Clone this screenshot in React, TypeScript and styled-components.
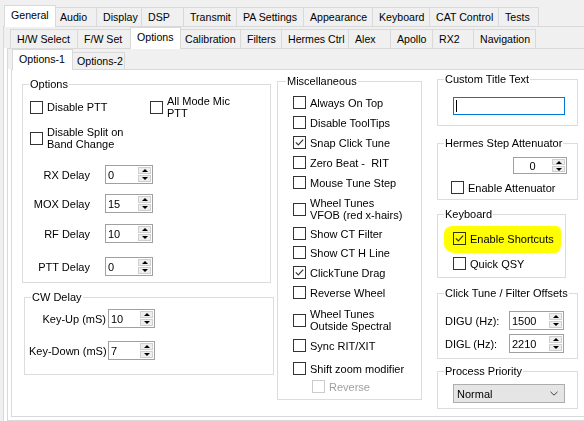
import * as React from "react"
import styled, { createGlobalStyle } from "styled-components"

const GlobalStyle = createGlobalStyle`
  html, body {
    margin: 0;
    padding: 0;
    background: #f0f0f0;
  }
  body {
    font-family: "Liberation Sans", Arial, sans-serif;
    font-size: 11px;
    color: #000;
  }
`

type TabDef = { label: string; w: number; active?: boolean }

const row1: TabDef[] = [
  { label: "General", w: 47, active: true },
  { label: "Audio", w: 43 },
  { label: "Display", w: 45 },
  { label: "DSP", w: 42 },
  { label: "Transmit", w: 53 },
  { label: "PA Settings", w: 67 },
  { label: "Appearance", w: 69 },
  { label: "Keyboard", w: 57 },
  { label: "CAT Control", w: 69 },
  { label: "Tests", w: 40 },
]

const row2: TabDef[] = [
  { label: "H/W Select", w: 67 },
  { label: "F/W Set", w: 55 },
  { label: "Options", w: 46, active: true },
  { label: "Calibration", w: 62 },
  { label: "Filters", w: 41 },
  { label: "Hermes Ctrl", w: 67 },
  { label: "Alex", w: 42 },
  { label: "Apollo", w: 42 },
  { label: "RX2", w: 41 },
  { label: "Navigation", w: 62 },
]

const row3: TabDef[] = [
  { label: "Options-1", w: 56, active: true },
  { label: "Options-2", w: 54 },
]

const Window = styled.div`
  box-sizing: border-box;
  width: 584px;
  height: 421px;
  overflow: hidden;
  padding-left: 3px;
  background: #f0f0f0;
`

const Strip = styled.div<{ $h: number; $pl: number }>`
  position: relative;
  z-index: 1;
  display: flex;
  align-items: flex-end;
  height: ${p => p.$h}px;
  padding-left: ${p => p.$pl}px;
  background: #f0f0f0;
`

const TabItem = styled.div<{
  $w: number
  $h: number
  $sel: number
  $selPad: number
  $active?: boolean
}>`
  position: relative;
  z-index: ${p => (p.$active ? 2 : 1)};
  box-sizing: border-box;
  flex: none;
  display: flex;
  align-items: center;
  width: ${p => (p.$active ? p.$w + 5 : p.$w + 1)}px;
  height: ${p => (p.$active ? p.$sel : p.$h)}px;
  margin: 0 ${p => (p.$active ? -3 : -1)}px ${p => (p.$active ? -1 : 0)}px
    ${p => (p.$active ? -2 : 0)}px;
  padding: 0 0 ${p => (p.$active ? p.$selPad : 0)}px 6px;
  border: 1px solid #d9d9d9;
  border-bottom: none;
  background: ${p => (p.$active ? "#ffffff" : "#f0f0f0")};
  white-space: nowrap;
  font-size: 10.6px;
  line-height: 13px;
`

const Frame = styled.div<{ $ml?: number; $w: number; $h: number; $pb?: number }>`
  box-sizing: border-box;
  width: ${p => p.$w}px;
  height: ${p => p.$h}px;
  margin-left: ${p => p.$ml ?? 0}px;
  padding-bottom: ${p => p.$pb ?? 0}px;
  border: 1px solid #d9d9d9;
  background: #ffffff;
`

const TabRow: React.FC<{
  tabs: TabDef[]
  stripH: number
  pl: number
  h: number
  sel: number
  selPad: number
}> = ({ tabs, stripH, pl, h, sel, selPad }) => (
  <Strip $h={stripH} $pl={pl}>
    {tabs.map(t => (
      <TabItem key={t.label} $w={t.w} $h={h} $sel={sel} $selPad={selPad} $active={t.active}>
        {t.label}
      </TabItem>
    ))}
  </Strip>
)

/* ---------- page content ---------- */

const Page = styled.div`
  display: flex;
  align-items: flex-start;
  padding-left: 10px;
`

const Column = styled.div<{ $w: number; $mt: number; $ml?: number }>`
  flex: none;
  display: flex;
  flex-direction: column;
  align-items: flex-start;
  width: ${p => p.$w}px;
  margin-top: ${p => p.$mt}px;
  margin-left: ${p => p.$ml ?? 0}px;
`

const Group = styled.fieldset<{ $w: number; $mt?: number; $ml?: number }>`
  box-sizing: border-box;
  width: ${p => p.$w}px;
  min-width: 0;
  margin: ${p => p.$mt ?? 0}px 0 0 ${p => p.$ml ?? 0}px;
  padding: 0;
  border: 1px solid #dcdcdc;
`

const Legend = styled.legend<{ $ml?: number }>`
  margin-left: ${p => p.$ml ?? 6}px;
  padding: 0 1px;
  line-height: 13px;
  font-size: 11px;
`

const Body = styled.div<{ $pl: number; $pb: number }>`
  display: flex;
  flex-direction: column;
  align-items: flex-start;
  padding: 0 0 ${p => p.$pb}px ${p => p.$pl}px;
`

const PairRow = styled.div<{ $mt: number }>`
  display: grid;
  grid-template-columns: 120px auto;
  align-items: center;
  height: 24px;
  margin-top: ${p => p.$mt}px;
`

const CheckRow = styled.div<{ $mt?: number; $ml?: number }>`
  position: relative;
  display: flex;
  align-items: center;
  gap: 4px;
  min-height: 13px;
  margin-top: ${p => p.$mt ?? 0}px;
  margin-left: ${p => p.$ml ?? 0}px;
`

const Box = styled.span<{ $disabled?: boolean }>`
  flex: none;
  box-sizing: border-box;
  display: flex;
  align-items: center;
  justify-content: center;
  width: 13px;
  height: 13px;
  border: 1px solid ${p => (p.$disabled ? "#cccccc" : "#333333")};
  background: #ffffff;
`

const CheckText = styled.span<{ $disabled?: boolean }>`
  line-height: 12px;
  white-space: nowrap;
  color: ${p => (p.$disabled ? "#a0a0a0" : "#000000")};
`

const Marker = styled.span`
  position: absolute;
  left: -9px;
  top: -6px;
  width: 117px;
  height: 27px;
  background: #ffff00;
  border-radius: 9px 5px 6px 11px / 7px 5px 8px 9px;
  mix-blend-mode: multiply;
  pointer-events: none;
`

const Check: React.FC<{
  label: React.ReactNode
  checked?: boolean
  disabled?: boolean
  mt?: number
  ml?: number
  marked?: boolean
}> = ({ label, checked, disabled, mt, ml, marked }) => (
  <CheckRow $mt={mt} $ml={ml}>
    <Box $disabled={disabled}>
      {checked && (
        <svg width="11" height="11" viewBox="0 0 11 11">
          <polyline points="1.8,5.4 4.3,7.9 9.2,2.6" fill="none" stroke="#333" strokeWidth="1.2" />
        </svg>
      )}
    </Box>
    <CheckText $disabled={disabled}>{label}</CheckText>
    {marked && <Marker />}
  </CheckRow>
)

const SpinRow = styled.div<{ $mt: number }>`
  display: flex;
  align-items: center;
  margin-top: ${p => p.$mt}px;
`

const SpinLabel = styled.span<{ $w: number; $right?: boolean; $gap: number }>`
  flex: none;
  width: ${p => p.$w}px;
  margin-right: ${p => p.$gap}px;
  text-align: ${p => (p.$right ? "right" : "left")};
  white-space: nowrap;
`

const SpinBox = styled.div<{ $w: number; $h: number; $ml?: number; $mt?: number }>`
  box-sizing: border-box;
  flex: none;
  display: flex;
  width: ${p => p.$w}px;
  height: ${p => p.$h}px;
  margin-left: ${p => p.$ml ?? 0}px;
  margin-top: ${p => p.$mt ?? 0}px;
  border: 1px solid #a0a0a0;
  background: #ffffff;
`

const SpinValue = styled.span<{ $center?: boolean }>`
  flex: 1;
  display: flex;
  align-items: center;
  justify-content: ${p => (p.$center ? "center" : "flex-start")};
  padding-left: ${p => (p.$center ? 0 : 2)}px;
`

const SpinButtons = styled.div`
  box-sizing: border-box;
  flex: none;
  display: flex;
  flex-direction: column;
  gap: 1px;
  width: 15px;
  padding: 1px;
`

const SpinButton = styled.span`
  flex: 1;
  display: flex;
  align-items: center;
  justify-content: center;
  border: 1px solid #cfcfcf;
  background: #eeeeee;
`

const Arrow = styled.span<{ $down?: boolean }>`
  width: 0;
  height: 0;
  border-left: 3px solid transparent;
  border-right: 3px solid transparent;
  ${p => (p.$down ? "border-top: 3px solid #000;" : "border-bottom: 3px solid #000;")}
`

const Spinner: React.FC<{
  value: string
  w: number
  h: number
  center?: boolean
  ml?: number
  mt?: number
}> = ({ value, w, h, center, ml, mt }) => (
  <SpinBox $w={w} $h={h} $ml={ml} $mt={mt}>
    <SpinValue $center={center}>{value}</SpinValue>
    <SpinButtons>
      <SpinButton>
        <Arrow />
      </SpinButton>
      <SpinButton>
        <Arrow $down />
      </SpinButton>
    </SpinButtons>
  </SpinBox>
)

const TextInput = styled.div<{ $mt: number }>`
  box-sizing: border-box;
  display: flex;
  align-items: center;
  width: 112px;
  height: 18px;
  margin-top: ${p => p.$mt}px;
  padding-left: 2px;
  border: 1px solid #0078d7;
  background: #ffffff;
`

const Caret = styled.span`
  width: 1px;
  height: 12px;
  background: #000;
`

const Combo = styled.div<{ $mt: number }>`
  box-sizing: border-box;
  display: flex;
  align-items: center;
  justify-content: space-between;
  width: 112px;
  height: 19px;
  margin-top: ${p => p.$mt}px;
  padding: 0 6px 0 3px;
  border: 1px solid #adadad;
  background: #e5e5e5;
`

const misc: { label: React.ReactNode; mt: number; checked?: boolean; disabled?: boolean; ml?: number }[] = [
  { label: "Always On Top", mt: 8 },
  { label: "Disable ToolTips", mt: 7 },
  { label: "Snap Click Tune", mt: 7, checked: true },
  { label: "Zero Beat -\u00a0 RIT", mt: 7 },
  { label: "Mouse Tune Step", mt: 7 },
  { label: <>Wheel Tunes<br />VFOB (red x-hairs)</>, mt: 8 },
  { label: "Show CT Filter", mt: 6 },
  { label: "Show CT H Line", mt: 6 },
  { label: "ClickTune Drag", mt: 7, checked: true },
  { label: "Reverse Wheel", mt: 7 },
  { label: <>Wheel Tunes<br />Outside Spectral</>, mt: 9 },
  { label: "Sync RIT/XIT", mt: 7 },
  { label: "Shift zoom modifier", mt: 10 },
  { label: "Reverse", mt: 5, disabled: true, ml: 19 },
]

const delays = [
  { label: "RX Delay", value: "0", mt: 15 },
  { label: "MOX Delay", value: "15", mt: 10 },
  { label: "RF Delay", value: "10", mt: 11 },
  { label: "PTT Delay", value: "0", mt: 14 },
]

const OptionsPage: React.FC = () => (
  <Page>
    <Column $w={252} $mt={8}>
      <Group $w={249}>
        <Legend>Options</Legend>
        <Body $pl={7} $pb={6}>
          <PairRow $mt={4}>
            <Check label="Disable PTT" />
            <Check label={<>All Mode Mic<br />PTT</>} />
          </PairRow>
          <Check mt={7} label={<>Disable Split on<br />Band Change</>} />
          {delays.map(d => (
            <SpinRow key={d.label} $mt={d.mt}>
              <SpinLabel $w={60} $gap={15} $right>
                {d.label}
              </SpinLabel>
              <Spinner value={d.value} w={48} h={19} />
            </SpinRow>
          ))}
        </Body>
      </Group>
      <Group $w={250} $mt={8} $ml={2}>
        <Legend>CW Delay</Legend>
        <Body $pl={4} $pb={14}>
          <SpinRow $mt={5}>
            <SpinLabel $w={77} $gap={2} $right>
              Key-Up (mS)
            </SpinLabel>
            <Spinner value="10" w={47} h={19} />
          </SpinRow>
          <SpinRow $mt={13}>
            <SpinLabel $w={77} $gap={2} $right>
              Key-Down (mS)
            </SpinLabel>
            <Spinner value="7" w={47} h={19} />
          </SpinRow>
        </Body>
      </Group>
    </Column>

    <Column $w={145} $mt={5} $ml={3}>
      <Group $w={145}>
        <Legend $ml={8}>Miscellaneous</Legend>
        <Body $pl={15} $pb={6}>
          {misc.map((m, i) => (
            <Check key={i} label={m.label} mt={m.mt} ml={m.ml} checked={m.checked} disabled={m.disabled} />
          ))}
        </Body>
      </Group>
    </Column>

    <Column $w={141} $mt={3} $ml={15}>
      <Group $w={141}>
        <Legend>Custom Title Text</Legend>
        <Body $pl={15} $pb={10}>
          <TextInput $mt={11}>
            <Caret />
          </TextInput>
        </Body>
      </Group>
      <Group $w={141} $mt={11}>
        <Legend>Hermes Step Attenuator</Legend>
        <Body $pl={13} $pb={5}>
          <Spinner value="0" w={54} h={17} center ml={62} mt={7} />
          <Check label="Enable Attenuator" mt={7} />
        </Body>
      </Group>
      <Group $w={129} $mt={8}>
        <Legend>Keyboard</Legend>
        <Body $pl={15} $pb={7}>
          <Check label="Enable Shortcuts" checked mt={11} marked />
          <Check label="Quick QSY" mt={12} />
        </Body>
      </Group>
      <Group $w={141} $mt={9}>
        <Legend>Click Tune / Filter Offsets</Legend>
        <Body $pl={7} $pb={5}>
          <SpinRow $mt={11}>
            <SpinLabel $w={64} $gap={0}>
              DIGU (Hz):
            </SpinLabel>
            <Spinner value="1500" w={55} h={19} />
          </SpinRow>
          <SpinRow $mt={4}>
            <SpinLabel $w={64} $gap={0}>
              DIGL (Hz):
            </SpinLabel>
            <Spinner value="2210" w={55} h={19} />
          </SpinRow>
        </Body>
      </Group>
      <Group $w={141} $mt={6}>
        <Legend>Process Priority</Legend>
        <Body $pl={15} $pb={5}>
          <Combo $mt={6}>
            <span>Normal</span>
            <svg width="8" height="5" viewBox="0 0 8 5">
              <polyline points="0.5,0.8 4,4.2 7.5,0.8" fill="none" stroke="#444" strokeWidth="1" />
            </svg>
          </Combo>
        </Body>
      </Group>
    </Column>
  </Page>
)

export default function App() {
  return (
    <>
      <GlobalStyle />
      <Window>
        <TabRow tabs={row1} stripH={26} pl={3} h={19} sel={22} selPad={3} />
        <Frame $w={660} $h={520}>
          <TabRow tabs={row2} stripH={21} pl={6} h={19} sel={22} selPad={3} />
          <Frame $ml={3} $w={650} $h={373} $pb={3}>
            <TabRow tabs={row3} stripH={20} pl={6} h={17} sel={21} selPad={2} />
            <Frame $ml={3} $w={640} $h={348}>
              <OptionsPage />
            </Frame>
          </Frame>
        </Frame>
      </Window>
    </>
  )
}
